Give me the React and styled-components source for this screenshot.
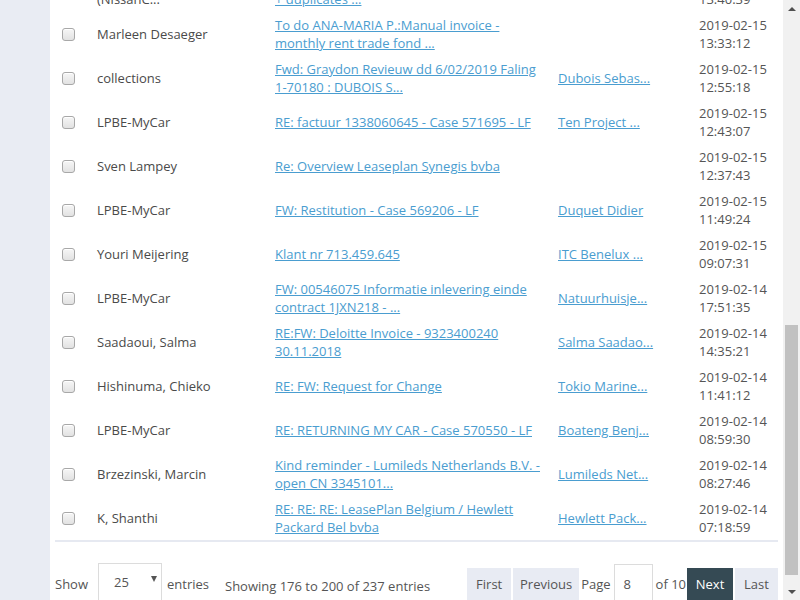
import React, { useLayoutEffect, useRef } from 'react';
import styled, { createGlobalStyle } from 'styled-components';

const GlobalStyle = createGlobalStyle`
	html, body {
		margin: 0;
		padding: 0;
		overflow: hidden;
	}
	body {
		font-family: 'Open Sans', 'Liberation Sans', sans-serif;
		font-size: 13px;
		color: #4a4a4a;
	}
`;

const Screen = styled.div`
	display: flex;
	height: 100vh;
`;

const Main = styled.div`
	flex: 1;
	overflow: hidden;
	background: #e9ecf3;
	display: flex;
`;

const Card = styled.div`
	flex: 1;
	margin-left: 50px;
	background: #fff;
	padding: 0 5px 13px;
	align-self: flex-start;
`;

const Table = styled.table`
	width: 100%;
	table-layout: fixed;
	border-collapse: collapse;
	border-bottom: 2px solid #e6e9f1;
`;

const Cell = styled.td`
	width: ${(p) => p.$width || 'auto'};
	padding: 4px ${(p) => p.$padRight || 0}px 4px ${(p) => p.$padLeft || 0}px;
	line-height: 18px;
	height: 36px;
	vertical-align: middle;
	color: ${(p) => (p.$muted ? '#555' : '#4a4a4a')};
`;

const NoWrap = styled.span`
	white-space: nowrap;
`;

const Check = styled.input.attrs({ type: 'checkbox' })`
	appearance: none;
	display: block;
	margin: 0;
	width: 13px;
	height: 13px;
	border: 1px solid #a8a8a8;
	border-radius: 3px;
	background: linear-gradient(#f6f6f6, #e2e2e2);
	box-shadow: inset 0 1px 0 #fff;
`;

const Link = styled.a`
	color: #4a9dd0;
	text-decoration: underline;
	cursor: pointer;
`;

const Footer = styled.div`
	display: flex;
	align-items: center;
	height: 44px;
	margin-top: 20px;
	color: #555;
`;

const Label = styled.span`
	margin: ${(p) => p.$margin || '0'};
`;

const SelectBox = styled.div`
	display: flex;
	align-items: center;
	justify-content: space-between;
	box-sizing: border-box;
	width: 64px;
	height: 42px;
	margin: 0 5px 0 10px;
	padding: 0 4px 4px 15px;
	border: 1px solid #dcdcdc;
	color: #555;
`;

const Caret = styled.span`
	width: 0;
	height: 0;
	border-left: 3px solid transparent;
	border-right: 3px solid transparent;
	border-top: 6px solid #555;
	margin-bottom: 6px;
`;

const Pager = styled.div`
	display: flex;
	align-items: center;
	margin-left: auto;
`;

const PageButton = styled.button`
	font-family: inherit;
	font-size: 13px;
	width: ${(p) => p.$width}px;
	height: 32px;
	margin-left: ${(p) => p.$gap || 0}px;
	padding: 0;
	border: none;
	background: ${(p) => (p.$active ? '#354a54' : '#e8ebf3')};
	color: ${(p) => (p.$active ? '#fff' : '#555')};
	cursor: pointer;
`;

const PageInput = styled.div`
	box-sizing: border-box;
	width: 39px;
	height: 40px;
	margin: 0 3px;
	padding: 0 9px;
	border: 1px solid #dcdcdc;
	display: flex;
	align-items: center;
	color: #555;
`;

const Scrollbar = styled.div`
	width: 17px;
	background: #f1f1f1;
	display: flex;
	flex-direction: column;
`;

const ArrowBox = styled.div`
	height: 17px;
	display: flex;
	align-items: center;
	justify-content: center;
`;

const Arrow = styled.span`
	width: 0;
	height: 0;
	border-left: 4px solid transparent;
	border-right: 4px solid transparent;
	${(p) => (p.$down ? 'border-top: 4px solid #505050;' : 'border-bottom: 4px solid #505050;')}
`;

const Track = styled.div`
	flex: 1;
	padding: 0 2px;
`;

const Thumb = styled.div`
	margin-top: ${(p) => p.$offset}px;
	height: ${(p) => p.$size}px;
	background: #c1c1c1;
`;

const rows = [
	{ name: 'Debrabandere Kris', subject: 'RE: Schadedossier 4471203 - Case 571702 - LF', from: 'Ethias nv', date: '2019-02-15', time: '14:21:08' },
	{ name: 'LPBE-MyCar', subject: 'FW: Bevestiging afspraak - Case 571698 - LF', from: 'Garage Van...', date: '2019-02-15', time: '14:02:44' },
	{ name: 'Sales Support', subject: 'Offerte aanvraag Peugeot 308 SW', from: 'Peeters Jan', date: '2019-02-15', time: '13:52:10' },
	{ name: 'Fleet Administration (NissanC...', subject: 'RE: Order confirmation Nissan Leaf +\u00a0duplicates\u00a0...', from: '', date: '2019-02-15', time: '13:40:39' },
	{ name: 'Marleen Desaeger', subject: 'To do ANA-MARIA P.:Manual invoice - monthly rent trade fond ...', from: '', date: '2019-02-15', time: '13:33:12' },
	{ name: 'collections', subject: 'Fwd: Graydon Revieuw dd 6/02/2019 Faling 1-70180 : DUBOIS S...', from: 'Dubois Sebas...', date: '2019-02-15', time: '12:55:18' },
	{ name: 'LPBE-MyCar', subject: 'RE: factuur 1338060645 - Case 571695 - LF', from: 'Ten Project ...', date: '2019-02-15', time: '12:43:07' },
	{ name: 'Sven Lampey', subject: 'Re: Overview Leaseplan Synegis bvba', from: '', date: '2019-02-15', time: '12:37:43' },
	{ name: 'LPBE-MyCar', subject: 'FW: Restitution - Case 569206 - LF', from: 'Duquet Didier', date: '2019-02-15', time: '11:49:24' },
	{ name: 'Youri Meijering', subject: 'Klant nr 713.459.645', from: 'ITC Benelux ...', date: '2019-02-15', time: '09:07:31' },
	{ name: 'LPBE-MyCar', subject: 'FW: 00546075 Informatie inlevering einde contract 1JXN218 - ...', from: 'Natuurhuisje...', date: '2019-02-14', time: '17:51:35' },
	{ name: 'Saadaoui, Salma', subject: 'RE:FW: Deloitte Invoice - 9323400240 30.11.2018', from: 'Salma Saadao...', date: '2019-02-14', time: '14:35:21' },
	{ name: 'Hishinuma, Chieko', subject: 'RE: FW: Request for Change', from: 'Tokio Marine...', date: '2019-02-14', time: '11:41:12' },
	{ name: 'LPBE-MyCar', subject: 'RE: RETURNING MY CAR - Case 570550 - LF', from: 'Boateng Benj...', date: '2019-02-14', time: '08:59:30' },
	{ name: 'Brzezinski, Marcin', subject: 'Kind reminder - Lumileds Netherlands B.V. - open CN 3345101...', from: 'Lumileds Net...', date: '2019-02-14', time: '08:27:46' },
	{ name: 'K, Shanthi', subject: 'RE: RE: RE: LeasePlan Belgium / Hewlett Packard Bel bvba', from: 'Hewlett Pack...', date: '2019-02-14', time: '07:18:59' },
];

const App = () => {
	const mainRef = useRef(null);

	// the list is shown scrolled down to its last page rows
	useLayoutEffect(() => {
		const el = mainRef.current;
		if (el) el.scrollTop = el.scrollHeight - el.clientHeight - 19;
	}, []);

	return (
		<Screen>
			<GlobalStyle />
			<Main ref={mainRef}>
				<Card>
					<Table>
						<tbody>
							{rows.map((row, i) => (
								<tr key={i}>
									<Cell $width="35px" $padLeft={7}>
										<Check />
									</Cell>
									<Cell $width="166px" $padRight={12}>
										{row.name}
									</Cell>
									<Cell $width="266px" $padRight={17}>
										<Link>{row.subject}</Link>
									</Cell>
									<Cell $width="131px" $padRight={10}>
										{row.from && <Link>{row.from}</Link>}
									</Cell>
									<Cell $muted>
										<NoWrap>{row.date}</NoWrap> <NoWrap>{row.time}</NoWrap>
									</Cell>
								</tr>
							))}
						</tbody>
					</Table>
					<Footer>
						<Label>Show</Label>
						<SelectBox>
							25
							<Caret />
						</SelectBox>
						<Label>entries</Label>
						<Label $margin="4px 0 0 16px">Showing 176 to 200 of 237 entries</Label>
						<Pager>
							<PageButton $width={44}>First</PageButton>
							<PageButton $width={66} $gap={2}>
								Previous
							</PageButton>
							<Label $margin="0 0 0 2px">Page</Label>
							<PageInput>8</PageInput>
							<Label>of 10</Label>
							<PageButton $active $width={46} $gap={1}>
								Next
							</PageButton>
							<PageButton $width={43} $gap={2}>
								Last
							</PageButton>
						</Pager>
					</Footer>
				</Card>
			</Main>
			<Scrollbar>
				<ArrowBox>
					<Arrow />
				</ArrowBox>
				<Track>
					<Thumb $offset={308} $size={250} />
				</Track>
				<ArrowBox>
					<Arrow $down />
				</ArrowBox>
			</Scrollbar>
		</Screen>
	);
};

export default App;
